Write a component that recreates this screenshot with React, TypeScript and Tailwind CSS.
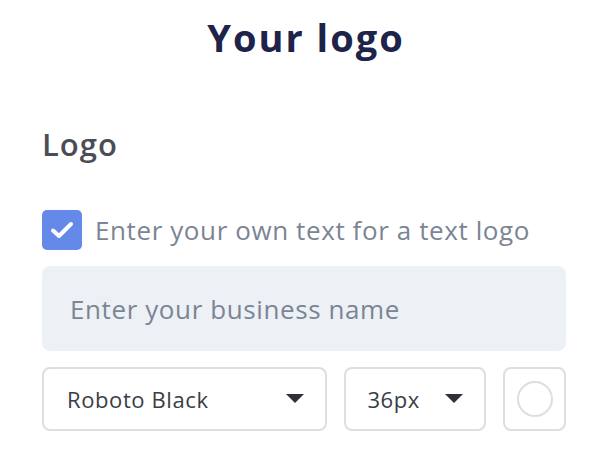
import { useState } from 'react'

const font = { fontFamily: '"Open Sans", "Noto Sans", sans-serif' }

function Caret() {
  return (
    <svg width="18" height="10" viewBox="0 0 18 10" className="shrink-0">
      <path d="M0 0 H18 L9 9 Z" fill="#2f3136" />
    </svg>
  )
}

export default function App() {
  const [useText, setUseText] = useState(true)

  return (
    <div className="w-[612px] h-[466px] bg-white overflow-hidden" style={font}>
      <h1 className="pt-[13px] text-center text-[38px] font-bold leading-[48px] tracking-[2px] text-[#1d2349]">Your logo</h1>

      <div className="mx-[42px] w-[524px]">
        <h2 className="mt-[66px] text-[31px] font-semibold leading-[34px] tracking-[1px] text-[#4a4d55]">Logo</h2>

        {/* checkbox row */}
        <label className="mt-[49px] flex items-center gap-[13px] cursor-pointer">
          <button
            onClick={() => setUseText(!useText)}
            className="flex h-[40px] w-[40px] items-center justify-center rounded-[5px] bg-[#6589e8]"
          >
            {useText && (
              <svg width="24" height="18" viewBox="0 0 24 18">
                <path d="M3 9.5 L9 15 L21 3" fill="none" stroke="white" strokeWidth="4" strokeLinecap="round" strokeLinejoin="round" />
              </svg>
            )}
          </button>
          <span className="text-[26px] leading-[40px] tracking-[0.6px] text-[#7b8594]">Enter your own text for a text logo</span>
        </label>

        {/* business name */}
        <input
          placeholder="Enter your business name"
          className="mt-[16px] h-[85px] w-full rounded-[8px] bg-[#edf1f6] px-[28px] text-[26px] tracking-[0.6px] text-[#3c3f47] outline-none placeholder:text-[#7b8594]"
        />

        {/* font controls */}
        <div className="mt-[16px] flex gap-[17px]">
          <div className="flex h-[64px] w-[286px] items-center justify-between rounded-[8px] border-2 border-[#dcdee2] pl-[23px] pr-[21px]">
            <span className="text-[22px] font-medium tracking-[0.6px] text-[#3a3d44]">Roboto Black</span>
            <Caret />
          </div>
          <div className="flex h-[64px] w-[142px] items-center justify-between rounded-[8px] border-2 border-[#dcdee2] pl-[21px] pr-[21px]">
            <span className="text-[22px] font-medium tracking-[0.6px] text-[#3a3d44]">36px</span>
            <Caret />
          </div>
          <div className="flex h-[64px] w-[63px] items-center justify-center rounded-[8px] border-2 border-[#dcdee2]">
            <div className="h-[36px] w-[36px] rounded-full border-2 border-[#dcdee2] bg-white" />
          </div>
        </div>
      </div>
    </div>
  )
}
